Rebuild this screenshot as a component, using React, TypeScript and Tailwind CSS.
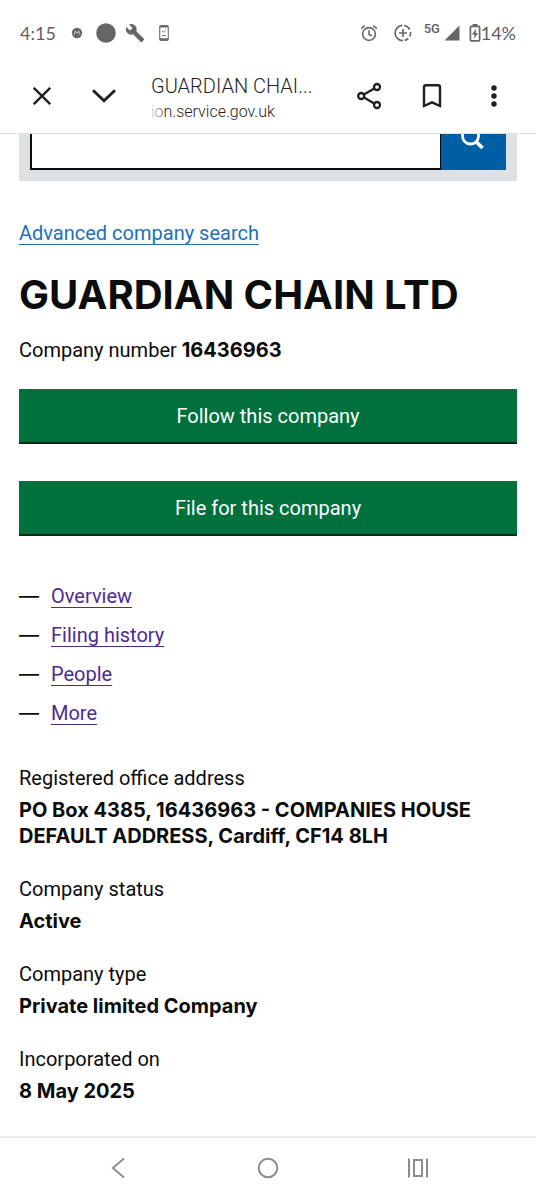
import type { ReactNode } from "react";

const tabs = ["Overview", "Filing history", "People", "More"];

const details = [
  {
    label: "Registered office address",
    value: "PO Box 4385, 16436963 - COMPANIES HOUSE DEFAULT ADDRESS, Cardiff, CF14 8LH",
  },
  { label: "Company status", value: "Active" },
  { label: "Company type", value: "Private limited Company" },
  { label: "Incorporated on", value: "8 May 2025" },
];

function StatusBar() {
  return (
    <div className="flex h-[66px] items-center justify-between px-5 font-['Lato',sans-serif] text-[18px] text-[#5f6062]">
      <div className="flex items-center">
        <span className="w-[51px]">4:15</span>
        <svg width="12" height="12" viewBox="0 0 12 12" aria-hidden>
          <circle cx="6" cy="6" r="5.2" fill="#666" />
          <path d="M2.8 8 4.3 4 6 6.4 7.7 4 9.2 8" fill="none" stroke="#ccc" strokeWidth="1" />
        </svg>
        <svg className="ml-[13px]" width="20" height="20" viewBox="0 0 20 20" aria-hidden>
          <circle cx="10" cy="10" r="9.8" fill="#666" />
        </svg>
        <svg className="ml-[9px]" width="20" height="20" viewBox="0 0 24 24" fill="#666" aria-hidden>
          <path d="M22.7 19l-9.1-9.1c.9-2.3.4-5-1.5-6.9-2-2-5-2.4-7.4-1.3L9 6 6 9 1.6 4.7C.4 7.1.9 10.1 2.9 12.1c1.9 1.9 4.6 2.4 6.9 1.5l9.1 9.1c.4.4 1 .4 1.4 0l2.3-2.3c.5-.4.5-1.1.1-1.4z" />
        </svg>
        <svg className="ml-[14px]" width="10" height="16" viewBox="0 0 10 16" aria-hidden>
          <rect x="0.7" y="0.7" width="8.6" height="14.6" rx="1" fill="none" stroke="#777" strokeWidth="1.2" />
          <path d="M1 1.5h8M1 14.2h8" stroke="#666" strokeWidth="2" />
          <path d="M3 6l1.4 1.4L7 4.6M3 10.5h4" fill="none" stroke="#777" />
        </svg>
      </div>
      <div className="flex items-center">
        <svg width="18" height="18" viewBox="0 0 18 18" fill="none" stroke="#666" strokeWidth="1.6" aria-hidden>
          <circle cx="9" cy="10" r="6.4" />
          <path d="M9 6.2V10.4l2.8 1.4M1.2 4.6 4.8 1.6M16.8 4.6 13.2 1.6" />
        </svg>
        <svg className="ml-4" width="18" height="18" viewBox="0 0 18 18" fill="none" stroke="#666" strokeWidth="1.7" aria-hidden>
          <path d="M10.2 1.5a7.6 7.6 0 0 1 5.6 4.2M16.5 7.8a7.6 7.6 0 0 1-.8 4.6M14.3 14.4a7.6 7.6 0 0 1-3.6 2M9 16.6A7.6 7.6 0 0 1 8.4 1.4M9 5v8M5 9h8" />
        </svg>
        <span className="mb-2 ml-3 w-5 font-['Roboto',sans-serif] text-[13px] leading-4 font-medium">5G</span>
        <svg width="16" height="16" viewBox="0 0 16 16" fill="#666" aria-hidden>
          <path d="M15.5.5V15.5H.5z" />
        </svg>
        <svg className="ml-[9px]" width="12" height="18" viewBox="0 0 12 18" aria-hidden>
          <path d="M3.6 0h4.8v2H3.6z" fill="#666" />
          <rect x="1.4" y="2.4" width="9.2" height="14.4" rx="1" fill="none" stroke="#666" strokeWidth="1.7" />
          <path d="M7 4.4 2.9 10.4h2.6L5 15l4.1-6H6.5z" fill="#666" />
        </svg>
        <span>14%</span>
      </div>
    </div>
  );
}

function ToolbarButton({ label, children }: { label: string; children: ReactNode }) {
  return (
    <button type="button" aria-label={label} className="flex h-14 w-[62px] shrink-0 items-center justify-center">
      {children}
    </button>
  );
}

function Toolbar() {
  return (
    <header className="flex h-[68px] items-center border-b border-[#dddfe0] pr-[11px] pb-[7px] pl-[11px] text-[#1f1f1f]">
      <ToolbarButton label="Close">
        <svg width="18" height="18" viewBox="0 0 18 18" fill="none" stroke="currentColor" strokeWidth="2.3">
          <path d="M.8.8l16.4 16.4M17.2.8.8 17.2" />
        </svg>
      </ToolbarButton>
      <ToolbarButton label="Minimise">
        <svg width="24" height="14" viewBox="0 0 24 14" fill="none" stroke="currentColor" strokeWidth="2.8">
          <path d="M1 1.2 12 11.8 23 1.2" />
        </svg>
      </ToolbarButton>
      <div className="ml-4 min-w-0 flex-1 pt-1 font-['Roboto',sans-serif]">
        <div className="text-[20px] leading-7 font-light whitespace-nowrap">GUARDIAN CHAI...</div>
        <div className="text-[16px] leading-6 font-light whitespace-nowrap">
          <span className="bg-linear-to-r from-[#d8d8d8] to-[#555] bg-clip-text text-transparent">io</span>
          n.service.gov.uk
        </div>
      </div>
      <ToolbarButton label="Share">
        <svg width="26" height="28" viewBox="0 0 26 28" fill="none" stroke="currentColor" strokeWidth="2.3">
          <circle cx="4.2" cy="14" r="3" />
          <circle cx="20" cy="5" r="3" />
          <circle cx="20" cy="23" r="3" />
          <path d="M7 12.5 17.2 6.6M7 15.5l10.2 5.9" />
        </svg>
      </ToolbarButton>
      <ToolbarButton label="Bookmark">
        <svg width="20" height="24" viewBox="0 0 20 24" fill="none" stroke="currentColor" strokeWidth="2.4">
          <path d="M2 22V3.2q0-2 2-2h12q2 0 2 2V22L10 18.4z" />
        </svg>
      </ToolbarButton>
      <ToolbarButton label="More options">
        <svg width="6" height="22" viewBox="0 0 6 22" fill="currentColor">
          <circle cx="3" cy="3" r="2.7" />
          <circle cx="3" cy="11" r="2.7" />
          <circle cx="3" cy="19" r="2.7" />
        </svg>
      </ToolbarButton>
    </header>
  );
}

function SearchPanel() {
  return (
    <div className="flex h-[47px] flex-col justify-end overflow-hidden bg-[#dee0e2]">
      <form className="flex px-[11px] pb-[11px]">
        <input
          type="search"
          aria-label="Search for a company or officer"
          className="h-[52px] min-w-0 flex-1 border-2 border-r border-[#0b0c0c] bg-white"
        />
        <button
          type="button"
          aria-label="Search"
          className="flex h-[52px] w-[65px] shrink-0 items-center justify-center bg-[#005ea5] pr-1 pb-3 text-white"
        >
          <svg width="24" height="24" viewBox="0 0 24 24" fill="none" stroke="currentColor" strokeWidth="2.8">
            <circle cx="10.5" cy="10" r="8" />
            <path d="M16 15.6l6.5 6.4" strokeWidth="3.6" />
          </svg>
        </button>
      </form>
    </div>
  );
}

function GreenButton({ children }: { children: ReactNode }) {
  return (
    <button
      type="button"
      className="block h-[55px] w-full border-b-2 border-[#002d18] bg-[#00703c] text-center text-white"
    >
      {children}
    </button>
  );
}

function NavBar() {
  return (
    <nav
      aria-label="System"
      className="flex h-16 items-center justify-center border-t-2 border-[#ececec] pb-0.5 text-[#8c8c8c]"
    >
      <button type="button" aria-label="Back" className="flex w-[150px] justify-center">
        <svg width="14" height="22" viewBox="0 0 14 22" fill="none" stroke="currentColor" strokeWidth="2">
          <path d="M13 1.5 2 11l11 9.5" />
        </svg>
      </button>
      <button type="button" aria-label="Home" className="flex w-[150px] justify-center">
        <svg width="22" height="22" viewBox="0 0 22 22" fill="none" stroke="currentColor" strokeWidth="2">
          <circle cx="11" cy="11" r="9.3" />
        </svg>
      </button>
      <button type="button" aria-label="Recent apps" className="flex w-[150px] justify-center">
        <svg width="22" height="20" viewBox="0 0 22 20" fill="none" stroke="currentColor" strokeWidth="2">
          <path d="M2 .5v19M20 .5v19M7 2h8v16H7z" />
        </svg>
      </button>
    </nav>
  );
}

export default function App() {
  return (
    <div className="flex min-h-screen flex-col bg-white">
      <StatusBar />
      <Toolbar />
      <main className="flex-1 px-[19px] pb-8 font-['Roboto',sans-serif] text-[20px] leading-[26px] text-[#0b0c0c]">
        <SearchPanel />
        <p className="mt-[39px]">
          <a href="#advanced" className="text-[#1d70b8] underline decoration-1 underline-offset-4">
            Advanced company search
          </a>
        </p>
        <h1 className="mt-[27px] font-['Inter',sans-serif] text-[40px] leading-[44px] font-bold">
          GUARDIAN CHAIN LTD
        </h1>
        <p className="mt-5">
          Company number <strong className="font-['Inter',sans-serif] font-bold">16436963</strong>
        </p>
        <div className="mt-[26px] flex flex-col gap-[37px]">
          <GreenButton>Follow this company</GreenButton>
          <GreenButton>File for this company</GreenButton>
        </div>
        <ul className="mt-[47px] flex flex-col gap-[13px]">
          {tabs.map((tab) => (
            <li key={tab} className="flex">
              <span className="w-8 shrink-0 font-['Inter',sans-serif]" aria-hidden>
                —
              </span>
              <a href="#tab" className="text-[#4c2c92] underline decoration-1 underline-offset-4">
                {tab}
              </a>
            </li>
          ))}
        </ul>
        <dl className="mt-[39px] flex flex-col gap-[27px]">
          {details.map(({ label, value }) => (
            <div key={label}>
              <dt>{label}</dt>
              <dd className="mt-1.5 font-['Inter',sans-serif] font-bold">{value}</dd>
            </div>
          ))}
        </dl>
      </main>
      <NavBar />
    </div>
  );
}
